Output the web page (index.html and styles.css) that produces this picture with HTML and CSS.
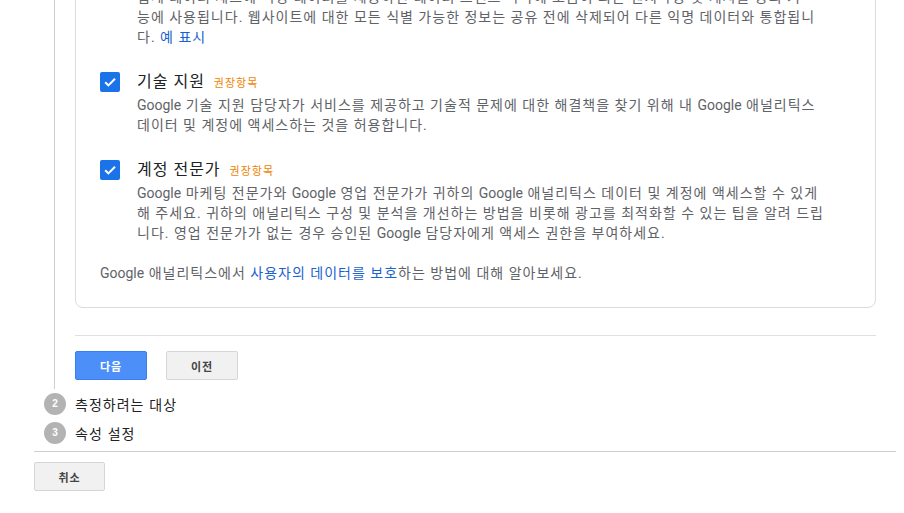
FILE: index.html
```html
<!DOCTYPE html>
<html lang="ko">
<head>
<meta charset="utf-8">
<title>계정 설정</title>
<link rel="stylesheet" href="styles.css">
</head>
<body>
<div class="page">
  <div class="step-body">
    <div class="card">
      <div class="option">
        <span class="checkbox"><svg viewBox="0 0 20 20" width="20" height="20"><path d="M5.2 10.2l3.2 3.2 6.6-6.6" fill="none" stroke="#fff" stroke-width="2"/></svg></span>
        <div class="option-text">
          <div class="option-title">벤치마킹 <span class="rec">권장항목</span></div>
          <p class="desc">집계 데이터 세트에 익명 데이터를 제공하면 데이터 트렌드 파악에 도움이 되는 벤치마킹 및 게시물 등의 기<br>능에 사용됩니다. 웹사이트에 대한 모든 식별 가능한 정보는 공유 전에 삭제되어 다른 익명 데이터와 통합됩니<br>다. <a class="link" href="#">예 표시</a></p>
        </div>
      </div>
      <div class="option">
        <span class="checkbox"><svg viewBox="0 0 20 20" width="20" height="20"><path d="M5.2 10.2l3.2 3.2 6.6-6.6" fill="none" stroke="#fff" stroke-width="2"/></svg></span>
        <div class="option-text">
          <div class="option-title">기술 지원 <span class="rec">권장항목</span></div>
          <p class="desc"><span class="en">Google</span> 기술 지원 담당자가 서비스를 제공하고 기술적 문제에 대한 해결책을 찾기 위해 내 <span class="en">Google</span> 애널리틱스<br>데이터 및 계정에 액세스하는 것을 허용합니다.</p>
        </div>
      </div>
      <div class="option">
        <span class="checkbox"><svg viewBox="0 0 20 20" width="20" height="20"><path d="M5.2 10.2l3.2 3.2 6.6-6.6" fill="none" stroke="#fff" stroke-width="2"/></svg></span>
        <div class="option-text">
          <div class="option-title">계정 전문가 <span class="rec">권장항목</span></div>
          <p class="desc"><span class="en">Google</span> 마케팅 전문가와 <span class="en">Google</span> 영업 전문가가 귀하의 <span class="en">Google</span> 애널리틱스 데이터 및 계정에 액세스할 수 있게<br>해 주세요. 귀하의 애널리틱스 구성 및 분석을 개선하는 방법을 비롯해 광고를 최적화할 수 있는 팁을 알려 드립<br>니다. 영업 전문가가 없는 경우 승인된 <span class="en">Google</span> 담당자에게 액세스 권한을 부여하세요.</p>
        </div>
      </div>
      <p class="note"><span class="en">Google</span> 애널리틱스에서 <a class="link" href="#">사용자의 데이터를 보호</a>하는 방법에 대해 알아보세요.</p>
    </div>
    <div class="divider"></div>
    <div class="actions">
      <button class="btn btn-primary">다음</button>
      <button class="btn">이전</button>
    </div>
  </div>
  <div class="step"><span class="step-num">2</span><span class="step-label">측정하려는 대상</span></div>
  <div class="step"><span class="step-num">3</span><span class="step-label">속성 설정</span></div>
  <div class="footer">
    <button class="btn">취소</button>
  </div>
</div>
</body>
</html>
```
FILE: styles.css
```css
html, body {
  margin: 0;
  padding: 0;
  background: #fff;
  overflow: hidden;
}
body {
  font-family: Roboto, "Noto Sans CJK KR", sans-serif;
  color: #5f6368;
  letter-spacing: 1px;
}
.en {
  letter-spacing: 0;
}
.page {
  margin-top: -62px;
  padding: 0 8px 0 34px;
}
.step-body {
  margin-left: 20px;
  border-left: 1px solid #d0d0d0;
  padding: 0 20px 9px 20px;
}
.card {
  border: 1px solid #dadce0;
  border-radius: 8px;
  padding: 24px;
}
.option {
  display: flex;
  gap: 17px;
  margin-bottom: 24px;
}
.checkbox {
  flex: none;
  width: 20px;
  height: 20px;
  margin-top: 1px;
  border-radius: 2px;
  background: #1a73e8;
  display: flex;
}
.option-title {
  font-size: 16px;
  line-height: 22px;
  height: 22px;
  color: #202124;
}
.rec {
  font-size: 11px;
  line-height: 1;
  color: #f08300;
  margin-left: 4px;
}
.desc {
  margin: 2px 0 0;
  font-size: 14px;
  line-height: 20px;
  color: #5f6368;
  white-space: nowrap;
}
.link {
  color: #1a62d0;
  text-decoration: none;
}
.note {
  margin: -4px 0 0;
  font-size: 14px;
  line-height: 20px;
  color: #5f6368;
}
.divider {
  margin-top: 27px;
  border-top: 1px solid #e0e0e0;
}
.actions {
  display: flex;
  gap: 19px;
  margin-top: 15px;
}
.btn {
  width: 72px;
  height: 29px;
  border: 1px solid #d6d6d6;
  border-radius: 2px;
  background: #f1f1f1;
  color: #444;
  font-family: "Noto Sans CJK KR", sans-serif;
  font-size: 11px;
  font-weight: 700;
  letter-spacing: 1px;
  padding: 0;
}
.btn-primary {
  background: #4d8ff8;
  border-color: #3a7ff0;
  color: #fff;
}
.step {
  display: flex;
  align-items: center;
  height: 29px;
  padding-left: 10px;
  gap: 9px;
}
.step-num {
  width: 22px;
  height: 22px;
  border-radius: 50%;
  background: #b3b3b3;
  color: #fff;
  font-family: "Liberation Sans", Arial, sans-serif;
  font-size: 10px;
  font-weight: 700;
  letter-spacing: 0;
  display: flex;
  align-items: center;
  justify-content: center;
}
.step-label {
  font-family: "Noto Sans CJK KR", sans-serif;
  font-size: 14px;
  color: #222;
}
.footer {
  margin-top: 4px;
  border-top: 1px solid #cfcfcf;
  padding-top: 10px;
}
.footer .btn {
  width: 71px;
}
```
